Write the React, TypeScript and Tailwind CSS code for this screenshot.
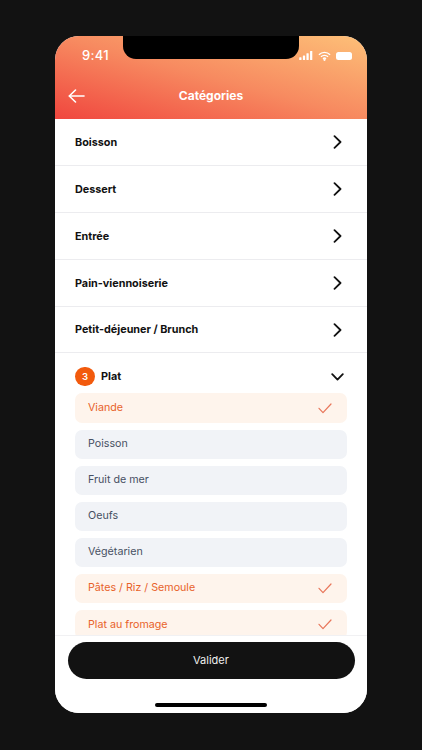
import React from "react";

const rows = ["Boisson", "Dessert", "Entrée", "Pain-viennoiserie", "Petit-déjeuner / Brunch"];
const items: [string, boolean][] = [
  ["Viande", true],
  ["Poisson", false],
  ["Fruit de mer", false],
  ["Oeufs", false],
  ["Végétarien", false],
  ["Pâtes / Riz / Semoule", true],
  ["Plat au fromage", true],
];

export default function App() {
  return (
    <div className="w-[422px] h-[750px] bg-[#121212] pt-9 pl-[55px] overflow-hidden" style={{ fontFamily: "Inter, 'Noto Sans', sans-serif" }}>
      <div className="relative w-[312px] h-[677px] bg-white rounded-[24px] overflow-hidden flex flex-col">
        <div className="relative h-[83px] shrink-0 bg-[linear-gradient(to_top_right,#f0463e_0%,#f78a60_50%,#fdc078_100%)] text-white">
          <div className="absolute left-[68px] top-0 w-[176px] h-[23px] bg-black rounded-b-[13px]" />
          <div className="flex items-center justify-between pl-[27px] pr-[15px] pt-[10px] h-[29px]">
            <span className="text-[13px] font-medium tracking-[0.3px]">9:41</span>
            <div className="flex items-center gap-[5px]">
              <svg width="14" height="9" viewBox="0 0 15 10" fill="white"><rect x="0" y="7" width="2.5" height="3" rx=".6" /><rect x="4" y="5" width="2.5" height="5" rx=".6" /><rect x="8" y="2.5" width="2.5" height="7.5" rx=".6" /><rect x="12" y="0" width="2.5" height="10" rx=".6" /></svg>
              <svg width="13" height="10" viewBox="0 0 14 10" fill="none" stroke="white" strokeWidth="1.5"><path d="M1 3.6a8.5 8.5 0 0 1 12 0" /><path d="M3.2 5.9a5.4 5.4 0 0 1 7.6 0" /><path d="M5.4 8a2.3 2.3 0 0 1 3.2 0" /><circle cx="7" cy="9" r=".5" fill="white" /></svg>
              <div className="w-[16px] h-[8px] bg-white rounded-[2.5px]" />
            </div>
          </div>
          <div className="relative flex items-center justify-center h-[26px] mt-[18px]">
            <svg className="absolute left-[13px] top-[6px]" width="17" height="14" viewBox="0 0 17 14" fill="none" stroke="white" strokeWidth="1.6" strokeLinecap="round" strokeLinejoin="round"><path d="M16 7H1.5" /><path d="M7.5 1 1.3 7l6.2 6" /></svg>
            <span className="text-[12px] font-bold">Catégories</span>
          </div>
        </div>

        {rows.map((r) => (
          <div key={r} className="h-[46.9px] shrink-0 border-b border-[#ececef] flex items-center justify-between pl-[20px] pr-[25px]">
            <span className="text-[10.8px] font-bold text-[#111] pt-[2px]">{r}</span>
            <svg width="9" height="14" viewBox="0 0 9 14" fill="none" stroke="#111" strokeWidth="1.8" strokeLinecap="round" strokeLinejoin="round"><path d="M1.5 1.2 7.5 7l-6 5.8" /></svg>
          </div>
        ))}

        <div className="flex items-center justify-between pl-[20px] pr-[23px] pt-[11px] h-[36px] shrink-0">
          <div className="flex items-center gap-[6px]">
            <span className="w-[20px] h-[19px] rounded-full bg-[#f25a0d] text-white text-[9.5px] font-semibold flex items-center justify-center">3</span>
            <span className="text-[10.8px] font-bold text-[#111]">Plat</span>
          </div>
          <svg width="13" height="8" viewBox="0 0 13 8" fill="none" stroke="#111" strokeWidth="1.8" strokeLinecap="round" strokeLinejoin="round"><path d="M1.2 1.2 6.5 6.6l5.3-5.4" /></svg>
        </div>

        <div className="relative flex-1 overflow-hidden">
          <div className="flex flex-col gap-[7px] px-[20px] pt-[4px]">
            {items.map(([label, on]) => (
              <div key={label} className={`h-[29.1px] shrink-0 rounded-[7px] flex items-center justify-between pl-[13px] pr-[15px] text-[10.7px] ${on ? "bg-[#fef4ec] text-[#e8622a]" : "bg-[#f1f3f7] text-[#475063]"}`}>
                <span>{label}</span>
                {on && <svg width="14" height="11" viewBox="0 0 14 11" fill="none" stroke="#e8765a" strokeWidth="1.2" strokeLinecap="round" strokeLinejoin="round"><path d="M1 5.3 5 9.6 13 1" /></svg>}
              </div>
            ))}
          </div>
          <div className="absolute left-0 right-0 bottom-0 h-[78px] bg-white border-t border-[#f1f1f3] flex flex-col items-center">
            <button className="mt-[6px] w-[287px] h-[37px] rounded-full bg-[#121212] text-[#eee] text-[11px]">Valider</button>
            <div className="mt-[24px] w-[112px] h-[4px] rounded-full bg-black" />
          </div>
        </div>
      </div>
    </div>
  );
}
